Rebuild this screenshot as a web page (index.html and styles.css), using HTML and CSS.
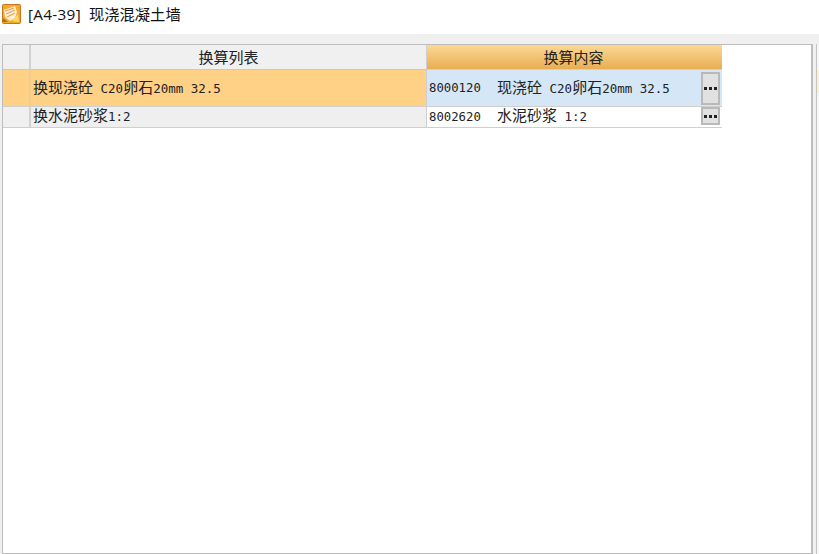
FILE: index.html
```html
<!DOCTYPE html>
<html lang="zh">
<head>
<meta charset="utf-8">
<title>[A4-39] 现浇混凝土墙</title>
<link rel="stylesheet" href="styles.css">
</head>
<body>
<header class="titlebar">
  <svg class="app-icon" width="19" height="20" viewBox="0 0 19 20">
    <rect x="0" y="0" width="19" height="20" rx="2" fill="#c8741a"/>
    <rect x="1" y="1" width="17" height="18" rx="1" fill="#f3ab2c"/>
    <path d="M2 6 L13 2 L15 8 L13 14 L8 17 L3 13 Z" fill="#fdf1dc"/>
    <path d="M3 7 L12 4 M4 10 L13 6 M5 13 L13 9" stroke="#e8a052" stroke-width="1.2" fill="none"/>
    <path d="M10 17 L16 10 L17 18 Z" fill="#ffd75e"/>
    <path d="M1 14 L6 18 L1 18 Z" fill="#b9691a"/>
  </svg>
  <span class="title-text"><span class="title-code">[A4-39]</span>&nbsp; 现浇混凝土墙</span>
</header>
<div class="workspace">
  <section class="panel">
    <div class="grid">
      <div class="hd corner"></div>
      <div class="hd"><span class="hd-label">换算列表</span></div>
      <div class="hd hd-active"><span class="hd-label">换算内容</span></div>

      <div class="ind ind-active"></div>
      <div class="name name-active"><span class="text"><span class="cjk">换现浇砼</span><span class="lat"> C20</span><span class="cjk">卵石</span><span class="lat">20mm 32.5</span></span></div>
      <div class="val val-active">
        <span class="code">8000120</span>
        <span class="text desc"><span class="cjk">现浇砼</span><span class="lat"> C20</span><span class="cjk">卵石</span><span class="lat">20mm 32.5</span></span>
        <button class="more more-tall" type="button" aria-label="更多"><i></i><i></i><i></i></button>
      </div>

      <div class="ind"></div>
      <div class="name"><span class="text text-short"><span class="cjk">换水泥砂浆</span><span class="lat">1:2</span></span></div>
      <div class="val">
        <span class="code">8002620</span>
        <span class="text text-short desc"><span class="cjk">水泥砂浆</span><span class="lat"> 1:2</span></span>
        <button class="more more-short" type="button" aria-label="更多"><i></i><i></i><i></i></button>
      </div>
    </div>
  </section>
  <aside class="side-panel"><div class="side-mark"></div></aside>
</div>
</body>
</html>
```

FILE: styles.css
```css
* { box-sizing: border-box; }
html, body { margin: 0; height: 100%; }
body {
  width: 819px;
  height: 554px;
  overflow: hidden;
  background: #f0f0f0;
  font-family: "Noto Sans CJK SC", sans-serif;
  color: #1a1a1a;
  display: flex;
  flex-direction: column;
}
.titlebar {
  height: 34px;
  background: #fff;
  display: flex;
  align-items: flex-start;
  padding: 3px 0 0 2px;
  gap: 7px;
  flex: none;
}
.app-icon { flex: none; margin-top: 1px; }
.title-text {
  font-family: "Open Sans", "Noto Sans CJK SC", sans-serif;
  font-size: 15.3px;
  line-height: 22px;
  color: #111;
}
.title-code { letter-spacing: 0.3px; }
.workspace {
  flex: 1;
  display: flex;
  padding: 10px 0 0 2px;
  min-height: 0;
}
.panel {
  width: 811px;
  height: 510px;
  background: #fff;
  border: 1px solid #bdbdbd;
  border-right: 2px solid #bdbdbd;
}
.side-panel {
  margin-left: 3px;
  width: 3px;
  flex: none;
  border-left: 1px solid #c4c4c4;
  background: #f6f6f6;
  padding-top: 26px;
}
.side-mark { height: 23px; background: #fdf0cc; }
.grid {
  display: grid;
  grid-template-columns: 28px 396px 295px;
  grid-template-rows: 25px 37px 21px;
  width: 719px;
  border-right: 1px solid #d6d6d6;
  font-size: 15px;
}
.hd {
  background: #f0f0f0;
  border-right: 1px solid #cfcfcf;
  border-bottom: 1px solid #c8c8c8;
  display: flex;
  align-items: center;
  justify-content: center;
  font-size: 15px;
  color: #222;
}
.hd-label { line-height: 18px; }
.hd.corner { border-right: 2px solid #d2d2d2; }
.hd-active {
  background: linear-gradient(#fbd995, #e9ad52);
  border-right: 0;
  border-bottom: 1px solid #d5d0c4;
  padding-right: 2px;
}
.ind {
  background: #f0f0f0;
  border-right: 2px solid #d2d2d2;
  border-bottom: 1px solid #cfcfcf;
}
.ind-active { background: #ffd187; border-right-color: #f3cb8c; }
.name {
  background: #efefef;
  border-right: 1px solid #cfcfcf;
  border-bottom: 1px solid #cfcfcf;
  padding-left: 2px;
  display: flex;
  align-items: center;
  white-space: pre;
}
.name-active { background: #ffd187; }
.val {
  background: #fff;
  display: flex;
  align-items: center;
  padding: 0 2px;
  border-bottom: 1px solid #cfcfcf;
  white-space: pre;
}
.val-active { background: #d5e7f7; }
.text { display: block; line-height: 18px; margin-bottom: 1px; white-space: pre; }
.text-short { margin-bottom: 3px; }
.cjk { font-size: 15px; color: #222; }
.lat {
  font-family: "DejaVu Sans Mono", monospace;
  font-size: 12.5px;
  color: #222;
}
.code {
  font-family: "DejaVu Sans Mono", monospace;
  font-size: 12.3px;
  width: 68px;
  flex: none;
  color: #222;
}
.desc { flex: 1; }
.more {
  flex: none;
  width: 19px;
  height: 18px;
  padding: 0;
  margin: 0;
  background: #e1e1e1;
  border: 2px solid #b9b9b9;
  display: flex;
  align-items: center;
  justify-content: center;
  gap: 2px;
}
.more i {
  display: block;
  width: 3px;
  height: 3px;
  background: #222;
}
.more-tall { height: 33px; }
.more-short { margin-bottom: 2px; }
```
